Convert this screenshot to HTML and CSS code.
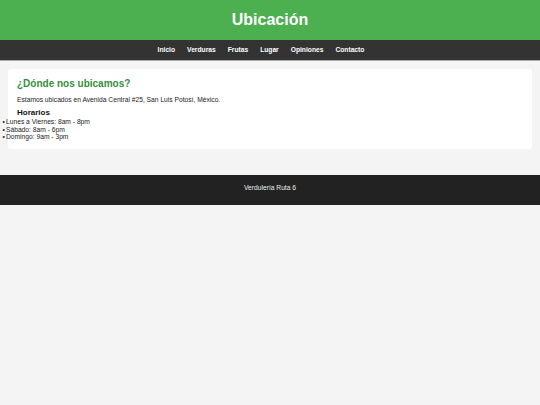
FILE: index.html
```html
<!DOCTYPE html>
<html lang="es">
<head>
<meta charset="utf-8">
<title>Ubicación</title>
<link rel="stylesheet" href="styles.css">
</head>
<body>
<header class="site-header">
  <h1 class="site-title">Ubicación</h1>
</header>
<nav class="site-nav">
  <a href="#">Inicio</a>
  <a href="#">Verduras</a>
  <a href="#">Frutas</a>
  <a href="#">Lugar</a>
  <a href="#">Opiniones</a>
  <a href="#">Contacto</a>
</nav>
<main class="content">
  <section class="card">
    <h2 class="card-title">¿Dónde nos ubicamos?</h2>
    <p class="card-text">Estamos ubicados en Avenida Central #25, San Luis Potosí, México.</p>
    <h3 class="card-sub">Horarios</h3>
    <ul class="hours">
      <li>Lunes a Viernes: 8am - 8pm</li>
      <li>Sábado: 8am - 6pm</li>
      <li>Domingo: 9am - 3pm</li>
    </ul>
  </section>
</main>
<footer class="site-footer">Verdulería Ruta 6</footer>
</body>
</html>
```
FILE: styles.css
```css
html, body {
  margin: 0;
  padding: 0;
}
body {
  background: #f4f4f4;
  font-family: "Liberation Sans", Arial, sans-serif;
  font-size: 6.7px;
  line-height: 7.8px;
  color: #222;
}
.site-header {
  background: #4caf50;
  height: 40px;
  display: flex;
  align-items: center;
  justify-content: center;
}
.site-title {
  margin: 0;
  color: #fff;
  font-size: 16px;
  line-height: 18px;
  font-weight: bold;
}
.site-nav {
  background: #333;
  height: 20px;
  display: flex;
  align-items: center;
  justify-content: center;
  gap: 12px;
  padding-right: 18px;
  box-shadow: 0 1px 0 #aaa;
}
.site-nav a {
  color: #fff;
  text-decoration: none;
  font-weight: bold;
  font-size: 6.7px;
}
.content {
  padding: 9px 8px 26px 8px;
}
.card {
  background: #fff;
  border-radius: 3px;
  padding: 9px 10px 8px 9px;
}
.card-title {
  margin: 0 0 6px 0;
  color: #388e3c;
  font-size: 10px;
  line-height: 11.5px;
  font-weight: bold;
}
.card-text {
  margin: 0 0 5px 0;
}
.card-sub {
  margin: 0;
  font-size: 8px;
  line-height: 9.6px;
  font-weight: bold;
  color: #111;
}
.hours {
  margin: 0 0 0 -14.5px;
  padding: 0;
  list-style: none;
}
.hours li::before {
  content: "•";
  display: inline-block;
  width: 3.5px;
}
.site-footer {
  background: #222;
  color: #eee;
  text-align: center;
  padding: 9px 0 13px 0;
  line-height: 8px;
}
```
